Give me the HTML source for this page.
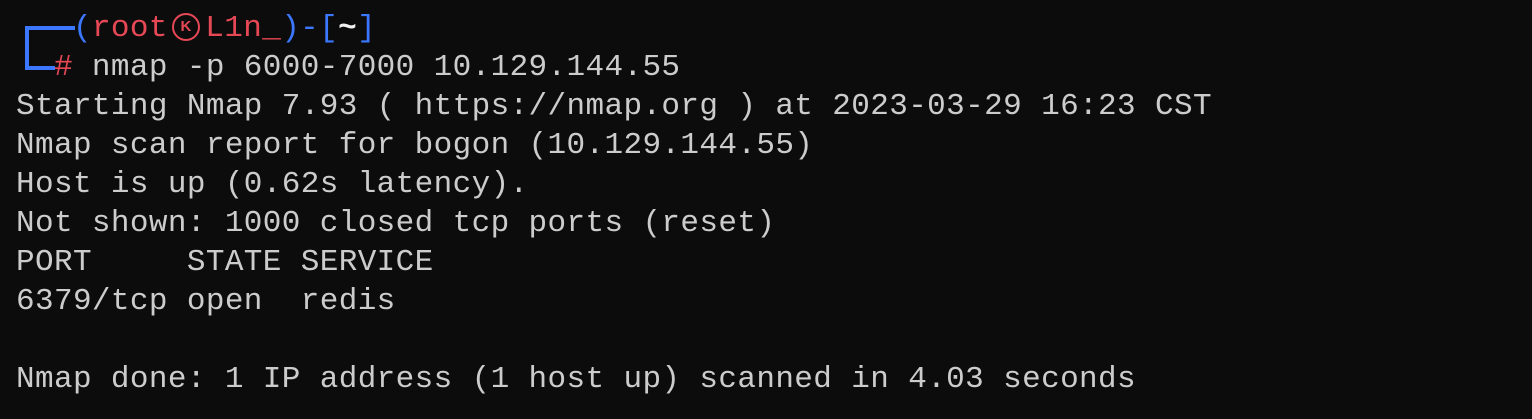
<!DOCTYPE html>
<html><head><meta charset="utf-8"><style>
html,body{margin:0;padding:0;background:#0c0c0c;width:1532px;height:419px;overflow:hidden}
.t{position:absolute;left:16px;top:9px;font-family:"Liberation Mono","DejaVu Sans Mono",monospace;font-size:31px;line-height:39px;color:#cccccc;white-space:pre;letter-spacing:0.38px}
.r{color:#e74856}.b{color:#3b78ff}.w{color:#f2f2f2;font-weight:bold}
.ln{position:absolute;background:#3b78ff}
.k{display:inline-block;width:37.4px;height:39px;vertical-align:top;position:relative;letter-spacing:0}
.k i{position:absolute;left:4px;top:4px;width:28px;height:28px;border:2.5px solid #e74856;border-radius:50%;box-sizing:border-box;font-style:normal;font-size:15px;line-height:23px;text-align:center;color:#e74856;font-family:"Liberation Sans",sans-serif;font-weight:bold}
</style></head><body>
<div class="ln" style="left:25px;top:26px;width:50px;height:4px"></div>
<div class="ln" style="left:25px;top:26px;width:4px;height:44px"></div>
<div class="ln" style="left:25px;top:66px;width:30px;height:4px"></div>
<div class="t">   <span class="b">(</span><span class="r">root<span class="k"><i>K</i></span>L1n_</span><span class="b">)-[</span><span class="w">~</span><span class="b">]</span>
  <span class="r">#</span> nmap -p 6000-7000 10.129.144.55
Starting Nmap 7.93 ( https://nmap.org ) at 2023-03-29 16:23 CST
Nmap scan report for bogon (10.129.144.55)
Host is up (0.62s latency).
Not shown: 1000 closed tcp ports (reset)
PORT     STATE SERVICE
6379/tcp open  redis

Nmap done: 1 IP address (1 host up) scanned in 4.03 seconds</div>
</body></html>
